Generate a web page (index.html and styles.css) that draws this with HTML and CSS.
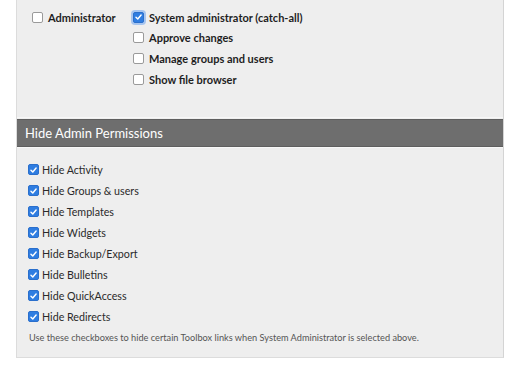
FILE: index.html
```html
<!DOCTYPE html>
<html>
<head>
<meta charset="utf-8">
<link rel="stylesheet" href="styles.css">
</head>
<body>
<div class="panel">
  <div class="top">
    <div class="col col-left">
      <div class="row bold"><span class="cb"></span>Administrator</div>
    </div>
    <div class="col">
      <div class="row bold"><span class="cb on focus"><svg viewBox="0 0 10 10"><path d="M2.2 5.2 L4.2 7.2 L7.9 2.8" /></svg></span>System administrator (catch-all)</div>
      <div class="row bold"><span class="cb"></span>Approve changes</div>
      <div class="row bold"><span class="cb"></span>Manage groups and users</div>
      <div class="row bold"><span class="cb"></span>Show file browser</div>
    </div>
  </div>
  <div class="header">Hide Admin Permissions</div>
  <div class="list">
    <div class="item"><span class="cb on"><svg viewBox="0 0 10 10"><path d="M2.2 5.2 L4.2 7.2 L7.9 2.8" /></svg></span>Hide Activity</div>
    <div class="item"><span class="cb on"><svg viewBox="0 0 10 10"><path d="M2.2 5.2 L4.2 7.2 L7.9 2.8" /></svg></span>Hide Groups &amp; users</div>
    <div class="item"><span class="cb on"><svg viewBox="0 0 10 10"><path d="M2.2 5.2 L4.2 7.2 L7.9 2.8" /></svg></span>Hide Templates</div>
    <div class="item"><span class="cb on"><svg viewBox="0 0 10 10"><path d="M2.2 5.2 L4.2 7.2 L7.9 2.8" /></svg></span>Hide Widgets</div>
    <div class="item"><span class="cb on"><svg viewBox="0 0 10 10"><path d="M2.2 5.2 L4.2 7.2 L7.9 2.8" /></svg></span>Hide Backup/Export</div>
    <div class="item"><span class="cb on"><svg viewBox="0 0 10 10"><path d="M2.2 5.2 L4.2 7.2 L7.9 2.8" /></svg></span>Hide Bulletins</div>
    <div class="item"><span class="cb on"><svg viewBox="0 0 10 10"><path d="M2.2 5.2 L4.2 7.2 L7.9 2.8" /></svg></span>Hide QuickAccess</div>
    <div class="item"><span class="cb on"><svg viewBox="0 0 10 10"><path d="M2.2 5.2 L4.2 7.2 L7.9 2.8" /></svg></span>Hide Redirects</div>
    <p class="note">Use these checkboxes to hide certain Toolbox links when System Administrator is selected above.</p>
  </div>
</div>
</body>
</html>
```

FILE: styles.css
```css
html, body {
  margin: 0;
  padding: 0;
  background: #fff;
}
body {
  font-family: Lato, "Open Sans", "Liberation Sans", sans-serif;
  color: #222;
  width: 517px;
  height: 365px;
  overflow: hidden;
}
.panel {
  margin-left: 16px;
  width: 486px;
  background: #eeeeee;
  border-left: 1px solid #dcdcdc;
  border-right: 1px solid #d4d4d4;
  border-bottom: 1px solid #dcdcdc;
}
.top {
  display: flex;
  padding: 7px 0 0 15px;
  height: 110px;
  border-bottom: 1px solid #f7f7f7;
}
.col-left {
  width: 101px;
}
.row {
  display: flex;
  align-items: center;
  height: 20.67px;
  font-size: 11px;
}
.bold {
  font-weight: 700;
  color: #1e1e1e;
}
.cb {
  flex: none;
  width: 9px;
  height: 9px;
  border: 1px solid #9a9a9a;
  border-radius: 2px;
  background: #fff;
  margin-right: 5px;
  display: inline-flex;
  align-items: center;
  justify-content: center;
  box-sizing: content-box;
}
.cb svg {
  width: 10px;
  height: 10px;
}
.cb svg path {
  fill: none;
  stroke: #fff;
  stroke-width: 1.6;
  stroke-linecap: round;
  stroke-linejoin: round;
}
.cb.on {
  background: #2f7de1;
  border-color: #2a6fcc;
}
.cb.focus {
  box-shadow: 0 0 0 2px rgba(120, 170, 240, 0.6);
}
.header {
  background: #6e6e6e;
  border-top: 1px solid #5e5e5e;
  border-bottom: 1px solid #5e5e5e;
  color: #fff;
  font-size: 13px;
  height: 26px;
  line-height: 26px;
  padding-left: 8px;
  margin-top: 1px;
}
.list {
  padding: 11px 0 13px 11px;
  border-top: 1px solid #f7f7f7;
}
.item {
  display: flex;
  align-items: center;
  height: 21px;
  font-size: 10.7px;
  color: #2a2a2a;
}
.item .cb {
  margin-right: 3px;
}
.note {
  margin: 5px 0 0 1px;
  font-size: 9.2px;
  line-height: 12px;
  color: #555;
}
```
